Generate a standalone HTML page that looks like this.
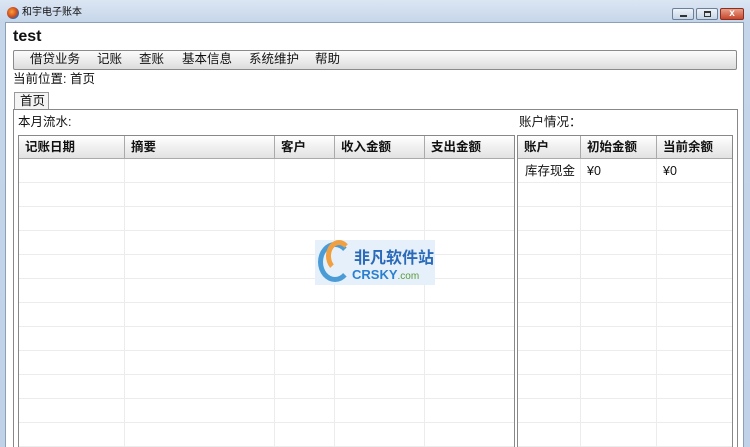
<!DOCTYPE html><html><head><meta charset="utf-8"><style>
*{margin:0;padding:0;box-sizing:border-box}
html,body{width:750px;height:447px;overflow:hidden}
body{background:#fff;font-family:"Liberation Sans","Noto Sans CJK SC",sans-serif;font-size:12px;line-height:14px;color:#111;position:relative}
.a{position:absolute}
.frame{left:0;top:0;width:750px;height:447px;background:linear-gradient(#dbe6f3,#c6d6ea 22px,#bfd2e8)}
.client{left:5px;top:22px;width:739px;height:425px;background:#fff;border:1px solid #8da0b8;border-bottom:none}
.tbl{border-left:1px solid #888;border-right:1px solid #888;overflow:hidden;background:#fff}
.hd{position:absolute;top:0;height:23px;background:linear-gradient(#fff,#f0f0f0 50%,#e2e2e2);border-bottom:1px solid #aaa;font-weight:bold;font-size:12.5px;line-height:22px;padding-left:6px;border-right:1px solid #aaa}
.row{position:absolute;left:0;right:0;height:1px;background:#ececec}
.col{position:absolute;top:0;bottom:0;width:1px;background:#ececec}
.btn{top:8px;height:12px;border:1px solid #6b7f99;border-radius:2px;background:linear-gradient(#eef3f9,#c6d4e6)}
</style></head><body>
<div class="a frame"></div>
<div class="a" style="left:7px;top:7px;width:12px;height:12px;border-radius:50%;background:radial-gradient(circle at 40% 40%,#f7a13b,#d04a1c 50%,#2f6cb3 70%)"></div>
<div class="a" style="left:22px;top:7px;font-size:10px;line-height:12px">和宇电子账本</div>
<div class="a btn" style="left:672px;width:22px"><div class="a" style="left:7px;top:6px;width:7px;height:2px;background:#333"></div></div>
<div class="a btn" style="left:696px;width:22px"><div class="a" style="left:7px;top:2px;width:7px;height:6px;border:1px solid #333;border-top-width:2px"></div></div>
<div class="a btn" style="left:720px;width:24px;background:linear-gradient(#e8a08a,#c8452c);border-color:#8a3020;color:#fff;font-size:10px;text-align:center;line-height:10px;font-weight:bold">x</div>
<div class="a client"></div>
<div class="a" style="left:13px;top:28px;font-size:16px;line-height:17px;font-weight:bold">test</div>
<div class="a" style="left:13px;top:50px;width:724px;height:20px;border:1px solid #8a8a8a;border-radius:2px;background:linear-gradient(#fbfbfb,#ececec 50%,#dcdcdc)"></div>
<div class="a" style="left:30px;top:52px;font-size:12.5px">借贷业务</div>
<div class="a" style="left:97px;top:52px;font-size:12.5px">记账</div>
<div class="a" style="left:139px;top:52px;font-size:12.5px">查账</div>
<div class="a" style="left:182px;top:52px;font-size:12.5px">基本信息</div>
<div class="a" style="left:249px;top:52px;font-size:12.5px">系统维护</div>
<div class="a" style="left:315px;top:52px;font-size:12.5px">帮助</div>
<div class="a" style="left:13px;top:72px;font-size:12.5px">当前位置: 首页</div>
<div class="a" style="left:14px;top:92px;width:35px;height:18px;border:1px solid #999;border-bottom:none;background:#f4f4f4;font-size:12.5px;padding-left:5px;line-height:16px">首页</div>
<div class="a" style="left:13px;top:109px;width:725px;height:340px;border:1px solid #888"></div>
<div class="a" style="left:18px;top:115px;font-size:12.5px">本月流水:</div>
<div class="a" style="left:519px;top:115px;font-size:12.5px">账户情况：</div>
<div class="a tbl" style="left:18px;top:135px;width:497px;height:312px;border-top:1px solid #888">
<div class="col" style="left:105px"></div><div class="col" style="left:255px"></div><div class="col" style="left:315px"></div><div class="col" style="left:405px"></div>
<div class="row" style="top:46px"></div><div class="row" style="top:70px"></div><div class="row" style="top:94px"></div><div class="row" style="top:118px"></div><div class="row" style="top:142px"></div><div class="row" style="top:166px"></div><div class="row" style="top:190px"></div><div class="row" style="top:214px"></div><div class="row" style="top:238px"></div><div class="row" style="top:262px"></div><div class="row" style="top:286px"></div><div class="row" style="top:310px"></div>
<div class="hd" style="left:0;width:106px">记账日期</div><div class="hd" style="left:106px;width:150px">摘要</div><div class="hd" style="left:256px;width:60px">客户</div><div class="hd" style="left:316px;width:90px">收入金额</div><div class="hd" style="left:406px;width:91px;border-right:none">支出金额</div>
</div>
<div class="a tbl" style="left:517px;top:135px;width:216px;height:312px;border-top:1px solid #888">
<div class="col" style="left:62px"></div><div class="col" style="left:138px"></div>
<div class="row" style="top:46px"></div><div class="row" style="top:70px"></div><div class="row" style="top:94px"></div><div class="row" style="top:118px"></div><div class="row" style="top:142px"></div><div class="row" style="top:166px"></div><div class="row" style="top:190px"></div><div class="row" style="top:214px"></div><div class="row" style="top:238px"></div><div class="row" style="top:262px"></div><div class="row" style="top:286px"></div><div class="row" style="top:310px"></div>
<div class="hd" style="left:0;width:63px">账户</div><div class="hd" style="left:63px;width:76px">初始金额</div><div class="hd" style="left:139px;width:77px;border-right:none">当前余额</div>
<div class="a" style="left:7px;top:28px;font-size:12.5px">库存现金</div><div class="a" style="left:69px;top:28px;font-size:12.5px">¥0</div><div class="a" style="left:145px;top:28px;font-size:12.5px">¥0</div>
</div>
<div class="a" style="left:315px;top:240px;width:120px;height:45px;background:#e6f0fa"></div>
<div class="a" style="left:318px;top:242px;width:34px;height:40px;border-radius:50%;border:5px solid #4a9bd6;border-right-color:transparent"></div>
<div class="a" style="left:326px;top:240px;width:26px;height:32px;border-radius:50%;border:5px solid #f0a040;border-right-color:transparent;border-bottom-color:transparent"></div>
<div class="a" style="left:354px;top:250px;font-size:16px;line-height:18px;font-weight:bold;color:#2a6ab8">非凡软件站</div>
<div class="a" style="left:352px;top:268px;font-size:13px;line-height:14px;font-weight:bold;color:#2a7fd0">CRSKY<span style="font-size:10px;color:#5a9a3a;font-weight:normal">.com</span></div>
</body></html>
